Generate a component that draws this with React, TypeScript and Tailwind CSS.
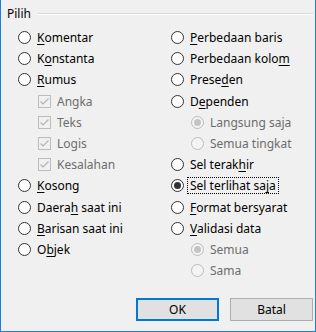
import React from "react";

type Item = {
  kind: "radio" | "check";
  pre: string;
  u?: string;
  post?: string;
  checked?: boolean;
  disabled?: boolean;
  indent?: boolean;
  focus?: boolean;
};

const left: Item[] = [
  { kind: "radio", pre: "", u: "K", post: "omentar" },
  { kind: "radio", pre: "K", u: "o", post: "nstanta" },
  { kind: "radio", pre: "", u: "R", post: "umus" },
  { kind: "check", pre: "Angka", checked: true, disabled: true, indent: true },
  { kind: "check", pre: "Teks", checked: true, disabled: true, indent: true },
  { kind: "check", pre: "Logis", checked: true, disabled: true, indent: true },
  { kind: "check", pre: "Kesalahan", checked: true, disabled: true, indent: true },
  { kind: "radio", pre: "", u: "K", post: "osong" },
  { kind: "radio", pre: "Daera", u: "h", post: " saat ini" },
  { kind: "radio", pre: "", u: "B", post: "arisan saat ini" },
  { kind: "radio", pre: "O", u: "b", post: "jek" },
];

const right: Item[] = [
  { kind: "radio", pre: "", u: "P", post: "erbedaan baris" },
  { kind: "radio", pre: "Perbedaan kolo", u: "m", post: "" },
  { kind: "radio", pre: "Prese", u: "d", post: "en" },
  { kind: "radio", pre: "D", u: "e", post: "penden" },
  { kind: "radio", pre: "Langsung saja", checked: true, disabled: true, indent: true },
  { kind: "radio", pre: "Semua tingkat", disabled: true, indent: true },
  { kind: "radio", pre: "Sel terak", u: "h", post: "ir" },
  { kind: "radio", pre: "Sel terlihat sa", u: "j", post: "a", checked: true, focus: true },
  { kind: "radio", pre: "", u: "F", post: "ormat bersyarat" },
  { kind: "radio", pre: "", u: "V", post: "alidasi data" },
  { kind: "radio", pre: "Semua", checked: true, disabled: true, indent: true },
  { kind: "radio", pre: "Sama", disabled: true, indent: true },
];

function RadioBox({ checked, disabled }: { checked?: boolean; disabled?: boolean }) {
  return (
    <div
      className={
        disabled
          ? "w-[13px] h-[13px] shrink-0 rounded-full border border-[#bcbcbc] bg-[#f4f4f4] flex items-center justify-center"
          : "w-[13px] h-[13px] shrink-0 rounded-full border border-[#333333] bg-white flex items-center justify-center"
      }
    >
      {checked && (
        <div
          className={
            disabled
              ? "w-[7px] h-[7px] rounded-full bg-[#c4c4c4]"
              : "w-[7px] h-[7px] rounded-full bg-[#333333]"
          }
        />
      )}
    </div>
  );
}

function CheckBox({ checked }: { checked?: boolean }) {
  return (
    <div className="w-[13px] h-[13px] shrink-0 border border-[#bcbcbc] bg-[#f0f0f0] flex items-center justify-center">
      {checked && (
        <svg width="11" height="11" viewBox="0 0 11 11">
          <path d="M1.5 5.5 L4 8 L9.5 2.5" fill="none" stroke="#b4b4b4" strokeWidth="1.2" />
        </svg>
      )}
    </div>
  );
}

function Row({ item }: { item: Item }) {
  return (
    <div className={item.indent ? "h-[21.2px] flex items-center pl-[20px]" : "h-[21.2px] flex items-center"}>
      {item.kind === "radio" ? (
        <RadioBox checked={item.checked} disabled={item.disabled} />
      ) : (
        <CheckBox checked={item.checked} />
      )}
      <span
        className={
          (item.focus
            ? "border border-dotted border-black "
            : "border border-transparent ") +
          "ml-[3px] px-[2px] h-[17px] leading-[15px] whitespace-nowrap " +
          (item.disabled ? "text-[#6d6d6d]" : "text-black")
        }
      >
        {item.pre}
        {item.u && <span className="underline decoration-1 underline-offset-2">{item.u}</span>}
        {item.post}
      </span>
    </div>
  );
}

export default function App() {
  return (
    <div className="w-[316px] h-[332px] bg-[#f0f0f0] border-x border-b border-[#1f7fd7] flex flex-col font-['Noto_Sans',sans-serif] text-[12px] text-black">
      <div className="h-[27px] shrink-0 flex items-center pl-[6px] pr-[2px]">
        <span className="leading-[16px]">Pilih</span>
        <div className="flex-1 ml-[7px] h-0 border-t border-t-[#d8d8d8] border-b border-b-white" />
      </div>
      <div className="flex pl-[17px]">
        <div className="w-[153px] flex flex-col">
          {left.map((it, i) => (
            <Row key={i} item={it} />
          ))}
        </div>
        <div className="flex-1 flex flex-col">
          {right.map((it, i) => (
            <Row key={i} item={it} />
          ))}
        </div>
      </div>
      <div className="mt-auto flex justify-end gap-[11px] pr-[2px] pb-[10px]">
        <button className="w-[83px] h-[23px] border-2 border-[#0078d7] bg-[#e1e1e1] text-black text-[12px] leading-none">
          OK
        </button>
        <button className="w-[83px] h-[23px] border border-[#adadad] bg-[#e1e1e1] text-black text-[12px] leading-none">
          Batal
        </button>
      </div>
    </div>
  );
}
